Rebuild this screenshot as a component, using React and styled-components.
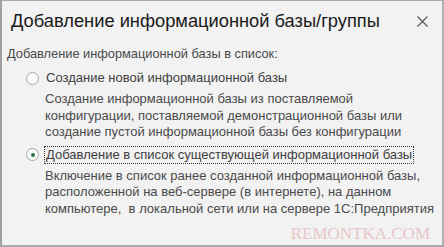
import styled, { createGlobalStyle } from "styled-components";

const GlobalStyle = createGlobalStyle`
  html, body {
    margin: 0;
    padding: 0;
    background: #f2f2f2;
  }
  body {
    font-family: "Liberation Sans", Arial, sans-serif;
  }
`;

export default function App() {
  return (
    <>
      <GlobalStyle />
      <Window>
        <TitleBar>
          <Title>Добавление информационной базы/группы</Title>
          <CloseBtn aria-label="Закрыть">
            <svg width="11" height="11" viewBox="0 0 11 11">
              <path d="M0.5 0.5 L10.5 10.5 M10.5 0.5 L0.5 10.5" stroke="#555" strokeWidth="1.1" />
            </svg>
          </CloseBtn>
        </TitleBar>
        <Body>
          <Caption>Добавление информационной базы в список:</Caption>
          <Option $top={7}>
            <Radio />
            <Label>Создание новой информационной базы</Label>
          </Option>
          <Description $top={4}>
            Создание информационной базы из поставляемой
            <br />
            конфигурации, поставляемой демонстрационной базы или
            <br />
            создание пустой информационной базы без конфигурации
          </Description>
          <Option $top={5}>
            <Radio $checked />
            <Label $focused>Добавление в список существующей информационной базы</Label>
          </Option>
          <Description $top={4}>
            Включение в список ранее созданной информационной базы,
            <br />
            расположенной на веб-сервере (в интернете), на данном
            <br />
            компьютере,&nbsp; в локальной сети или на сервере 1С:Предприятия
          </Description>
        </Body>
        <Watermark>REMONTKA.COM</Watermark>
      </Window>
    </>
  );
}

const Window = styled.div`
  position: relative;
  box-sizing: border-box;
  width: 444px;
  height: 247px;
  border: 1px solid #a8a8a8;
  border-left: 2px solid #a0a0a0;
  border-right: 2px solid #b0b0b0;
  border-bottom: 2px solid #a8a8a8;
  background: #f2f2f2;
  overflow: hidden;
`;

const TitleBar = styled.div`
  display: flex;
  align-items: center;
  justify-content: space-between;
  padding: 6px 14px 0 9px;
  height: 28px;
`;

const Title = styled.h1`
  margin: 0;
  font-size: 18.3px;
  font-weight: normal;
  color: #1a1a1a;
`;

const CloseBtn = styled.button`
  display: flex;
  padding: 0;
  margin-top: 1px;
  border: none;
  background: none;
`;

const Body = styled.div`
  padding: 11px 0 0 5px;
  color: #4a4a4a;
`;

const Caption = styled.div`
  font-size: 12.8px;
  line-height: 16px;
`;

const Option = styled.div`
  display: flex;
  align-items: center;
  gap: 5px;
  margin: ${(p) => p.$top}px 0 0 19px;
  color: #404040;
  font-size: 13px;
`;

const Radio = styled.span`
  position: relative;
  box-sizing: border-box;
  width: 13px;
  height: 13px;
  border-radius: 50%;
  border: 1px solid #a5a5a5;
  background: #fafafa;
  flex-shrink: 0;

  &::after {
    content: "";
    display: ${(p) => (p.$checked ? "block" : "none")};
    position: absolute;
    left: 3.5px;
    top: 3.5px;
    width: 4px;
    height: 4px;
    border-radius: 50%;
    background: #217346;
  }
`;

const Label = styled.span`
  line-height: 16px;
  padding: 0 1px;
  border: 1px dotted ${(p) => (p.$focused ? "#333" : "transparent")};
`;

const Description = styled.div`
  margin: ${(p) => p.$top}px 0 0 38px;
  font-size: 13px;
  line-height: 16.5px;
  color: #4a4a4a;
`;

const Watermark = styled.div`
  position: absolute;
  right: 12px;
  bottom: 1px;
  font-family: "Liberation Serif", "Times New Roman", serif;
  font-size: 17px;
  color: #e8c6c6;
`;
